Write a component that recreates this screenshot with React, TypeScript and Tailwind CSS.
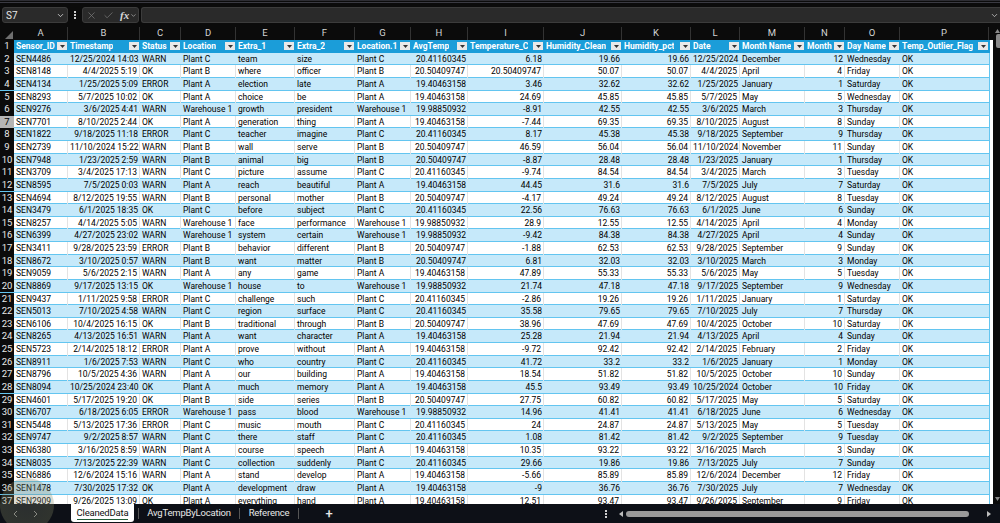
import React from "react";
import { ChevronDown, Check, X } from "lucide-react";

const headers = [
  "Sensor_ID", "Timestamp", "Status", "Location", "Extra_1", "Extra_2", "Location.1", "AvgTemp",
  "Temperature_C", "Humidity_Clean", "Humidity_pct", "Date", "Month Name", "Month", "Day Name", "Temp_Outlier_Flag",
];
const letters = "ABCDEFGHIJKLMNOP".split("");

const avg: Record<string, string> = {
  "Plant A": "19.40463158",
  "Plant B": "20.50409747",
  "Plant C": "20.41160345",
  "Warehouse 1": "19.98850932",
};
const W = "Warehouse 1";
const A = "Plant A";
const B = "Plant B";
const C = "Plant C";

// id, timestamp, status, location, extra1, extra2, temp, humidity, date, month name, month, day
const rows: string[][] = [
  ["SEN4486", "12/25/2024 14:03", "WARN", C, "team", "size", "6.18", "19.66", "12/25/2024", "December", "12", "Wednesday"],
  ["SEN8148", "4/4/2025 5:19", "OK", B, "where", "officer", "20.50409747", "50.07", "4/4/2025", "April", "4", "Friday"],
  ["SEN4134", "1/25/2025 5:09", "ERROR", A, "election", "late", "3.46", "32.62", "1/25/2025", "January", "1", "Saturday"],
  ["SEN8293", "5/7/2025 10:02", "OK", A, "choice", "be", "24.69", "45.85", "5/7/2025", "May", "5", "Wednesday"],
  ["SEN9276", "3/6/2025 4:41", "WARN", W, "growth", "president", "-8.91", "42.55", "3/6/2025", "March", "3", "Thursday"],
  ["SEN7701", "8/10/2025 2:44", "OK", A, "generation", "thing", "-7.44", "69.35", "8/10/2025", "August", "8", "Sunday"],
  ["SEN1822", "9/18/2025 11:18", "ERROR", C, "teacher", "imagine", "8.17", "45.38", "9/18/2025", "September", "9", "Thursday"],
  ["SEN2739", "11/10/2024 15:22", "WARN", B, "wall", "serve", "46.59", "56.04", "11/10/2024", "November", "11", "Sunday"],
  ["SEN7948", "1/23/2025 2:59", "WARN", B, "animal", "big", "-8.87", "28.48", "1/23/2025", "January", "1", "Thursday"],
  ["SEN3709", "3/4/2025 17:13", "WARN", C, "picture", "assume", "-9.74", "84.54", "3/4/2025", "March", "3", "Tuesday"],
  ["SEN8595", "7/5/2025 0:03", "WARN", A, "reach", "beautiful", "44.45", "31.6", "7/5/2025", "July", "7", "Saturday"],
  ["SEN4694", "8/12/2025 19:55", "WARN", B, "personal", "mother", "-4.17", "49.24", "8/12/2025", "August", "8", "Tuesday"],
  ["SEN3479", "6/1/2025 18:35", "OK", C, "before", "subject", "22.56", "76.63", "6/1/2025", "June", "6", "Sunday"],
  ["SEN8257", "4/14/2025 5:05", "WARN", W, "face", "performance", "28.9", "12.55", "4/14/2025", "April", "4", "Monday"],
  ["SEN6399", "4/27/2025 23:02", "WARN", W, "system", "certain", "-9.42", "84.38", "4/27/2025", "April", "4", "Sunday"],
  ["SEN3411", "9/28/2025 23:59", "ERROR", B, "behavior", "different", "-1.88", "62.53", "9/28/2025", "September", "9", "Sunday"],
  ["SEN8672", "3/10/2025 0:57", "WARN", B, "want", "matter", "6.81", "32.03", "3/10/2025", "March", "3", "Monday"],
  ["SEN9059", "5/6/2025 2:15", "WARN", A, "any", "game", "47.89", "55.33", "5/6/2025", "May", "5", "Tuesday"],
  ["SEN8869", "9/17/2025 13:15", "OK", W, "house", "to", "21.74", "47.18", "9/17/2025", "September", "9", "Wednesday"],
  ["SEN9437", "1/11/2025 9:58", "ERROR", C, "challenge", "such", "-2.86", "19.26", "1/11/2025", "January", "1", "Saturday"],
  ["SEN5013", "7/10/2025 4:58", "WARN", C, "region", "surface", "35.58", "79.65", "7/10/2025", "July", "7", "Thursday"],
  ["SEN6106", "10/4/2025 16:15", "OK", B, "traditional", "through", "38.96", "47.69", "10/4/2025", "October", "10", "Saturday"],
  ["SEN8265", "4/13/2025 16:51", "WARN", A, "want", "character", "25.28", "21.94", "4/13/2025", "April", "4", "Sunday"],
  ["SEN5723", "2/14/2025 18:12", "ERROR", A, "prove", "without", "-9.72", "92.42", "2/14/2025", "February", "2", "Friday"],
  ["SEN8911", "1/6/2025 7:53", "WARN", C, "who", "country", "41.72", "33.2", "1/6/2025", "January", "1", "Monday"],
  ["SEN8796", "10/5/2025 4:36", "WARN", A, "our", "building", "18.54", "51.82", "10/5/2025", "October", "10", "Sunday"],
  ["SEN8094", "10/25/2024 23:40", "OK", A, "much", "memory", "45.5", "93.49", "10/25/2024", "October", "10", "Friday"],
  ["SEN4601", "5/17/2025 19:20", "OK", B, "side", "series", "27.75", "60.82", "5/17/2025", "May", "5", "Saturday"],
  ["SEN6707", "6/18/2025 6:05", "ERROR", W, "pass", "blood", "14.96", "41.41", "6/18/2025", "June", "6", "Wednesday"],
  ["SEN5448", "5/13/2025 17:36", "ERROR", C, "music", "mouth", "24", "24.87", "5/13/2025", "May", "5", "Tuesday"],
  ["SEN9747", "9/2/2025 8:57", "WARN", C, "there", "staff", "1.08", "81.42", "9/2/2025", "September", "9", "Tuesday"],
  ["SEN6380", "3/16/2025 8:59", "WARN", A, "course", "speech", "10.35", "93.22", "3/16/2025", "March", "3", "Sunday"],
  ["SEN8035", "7/13/2025 22:39", "WARN", C, "collection", "suddenly", "29.66", "19.86", "7/13/2025", "July", "7", "Sunday"],
  ["SEN6886", "12/6/2024 15:16", "WARN", A, "stand", "develop", "-5.66", "85.89", "12/6/2024", "December", "12", "Friday"],
  ["SEN1478", "7/30/2025 17:32", "OK", A, "development", "draw", "-9", "36.76", "7/30/2025", "July", "7", "Wednesday"],
  ["SEN2909", "9/26/2025 13:09", "OK", A, "everything", "hand", "12.51", "93.47", "9/26/2025", "September", "9", "Friday"],
];

// column widths shared by every row of the sheet
const gridCols =
  "grid grid-cols-[14px_54px_72px_41px_55px_59px_60px_56px_57px_76px_78px_69px_49px_65px_40px_55px_89px]";

function Cell({ value, right, white }: { value: string; right?: boolean; white: boolean }) {
  return (
    <div
      className={`overflow-hidden whitespace-nowrap px-[2px] leading-[12.6px] ${right ? "text-right" : "text-left"} ${
        white ? "border-r border-[#e3e3e3]" : ""
      }`}
    >
      {value}
    </div>
  );
}

function DataRow({ row, index }: { row: string[]; index: number }) {
  const [id, ts, status, loc, e1, e2, temp, hum, date, mName, month, day] = row;
  const white = index % 2 === 1;
  const num = index + 2;
  const selected = num === 7;
  return (
    <div
      className={`${gridCols} h-[12.625px] border-b border-[#63c5f0] text-black ${
        white ? "bg-white" : "bg-[#c6e9fa]"
      }`}
    >
      <div
        className={`text-center text-[9.5px] leading-[12.6px] ${
          selected ? "bg-[#b5b5b5] text-black" : "bg-[#0b0b0b] text-[#e8e8e8]"
        }`}
      >
        {num}
      </div>
      <Cell value={id} white={white} />
      <Cell value={ts} right white={white} />
      <Cell value={status} white={white} />
      <Cell value={loc} white={white} />
      <Cell value={e1} white={white} />
      <Cell value={e2} white={white} />
      <Cell value={loc} white={white} />
      <Cell value={avg[loc]} right white={white} />
      <Cell value={temp} right white={white} />
      <Cell value={hum} right white={white} />
      <Cell value={hum} right white={white} />
      <Cell value={date} right white={white} />
      <Cell value={mName} white={white} />
      <Cell value={month} right white={white} />
      <Cell value={day} white={white} />
      <Cell value="OK" white={false} />
    </div>
  );
}

function FilterHeader({ label }: { label: string }) {
  return (
    <div className="flex min-w-0 items-center justify-between overflow-hidden pl-[2px] pr-[1px]">
      <span className="overflow-hidden whitespace-nowrap font-bold text-white">{label}</span>
      <span className="flex h-[8px] w-[10px] shrink-0 items-center justify-center bg-[#e9e9e9]">
        <svg width="5" height="3" viewBox="0 0 5 3">
          <path d="M0 0h5L2.5 3z" fill="#333" />
        </svg>
      </span>
    </div>
  );
}

function Dots() {
  return (
    <span className="flex flex-col gap-[1px]">
      <span className="h-[2px] w-[2px] bg-[#cfcfcf]" />
      <span className="h-[2px] w-[2px] bg-[#cfcfcf]" />
      <span className="h-[2px] w-[2px] bg-[#cfcfcf]" />
    </span>
  );
}

export default function App() {
  return (
    <div className="relative flex h-[523px] w-[1000px] flex-col overflow-hidden bg-[#0b0b0b] font-['Roboto',sans-serif] text-[8.5px]">
      {/* window edge */}
      <div className="h-[7px] shrink-0 border-t border-[#2d2d33] pt-[1px]">
        <div className="h-[1px] bg-[#3a3a42]" />
      </div>

      {/* formula bar */}
      <div className="flex h-[16px] shrink-0 items-stretch gap-[2px] pl-[2px] text-[#e6e6e6]">
        <div className="flex w-[66px] items-center justify-between rounded-[3px] border border-[#3c3c3c] bg-[#2a2a2a] pl-[3px] pr-[2px] text-[10px]">
          <span>S7</span>
          <ChevronDown size={9} strokeWidth={2} />
        </div>
        <div className="flex w-[10px] items-center justify-center">
          <Dots />
        </div>
        <div className="flex w-[57px] items-center gap-[6px] rounded-[3px] border border-[#3c3c3c] bg-[#2a2a2a] pl-[3px] text-[#7d7d7d]">
          <X size={11} strokeWidth={1.5} />
          <Check size={11} strokeWidth={1.5} />
          <span className="flex items-center gap-[1px]">
            <span className="font-['Liberation_Serif',serif] text-[11px] font-bold italic text-[#d8d8d8]">fx</span>
            <ChevronDown size={7} strokeWidth={2} className="text-[#c8c8c8]" />
          </span>
        </div>
        <div className="flex flex-1 items-center justify-end rounded-l-[3px] border border-r-0 border-[#3c3c3c] bg-[#2a2a2a] pr-[1px]">
          <ChevronDown size={9} strokeWidth={2} className="text-[#cfcfcf]" />
        </div>
      </div>

      <div className="h-[4px] shrink-0" />

      {/* sheet + vertical scrollbar */}
      <div className="flex h-[477px] shrink-0 items-stretch overflow-hidden">
        <div className="w-[990px] shrink-0">
          <div className={`${gridCols} h-[13px] bg-[#0b0b0b] text-[9.5px] text-[#d4d4d4]`}>
            <div className="flex items-end justify-end pb-[1px] pr-[1px]">
              <svg width="8" height="8" viewBox="0 0 8 8">
                <path d="M8 0v8H0z" fill="#6f6f6f" />
              </svg>
            </div>
            {letters.map((l) => (
              <div key={l} className="border-r border-[#333] text-center leading-[12px]">
                {l}
              </div>
            ))}
          </div>
          <div className={`${gridCols} h-[12.625px] bg-[#1b9dd9] leading-[12.6px]`}>
            <div className="bg-[#0b0b0b] text-center text-[9.5px] text-[#e8e8e8]">1</div>
            {headers.map((h) => (
              <FilterHeader key={h} label={h} />
            ))}
          </div>
          <div className="border-r border-[#63c5f0]">
            {rows.map((row, i) => (
              <DataRow key={row[0]} row={row} index={i} />
            ))}
          </div>
        </div>
        {/* empty column Q, then the scrollbar cut off by the screenshot edge */}
        <div className="mt-[13px] w-[3px] shrink-0 bg-white" />
        <div className="flex flex-1 flex-col items-end pb-[3px] pt-[2px]">
          <svg width="5" height="4" viewBox="0 0 5 4">
            <path d="M2.5 0L5 4H0z" fill="#8a8a8a" />
          </svg>
          <div className="mt-[1px] h-[14px] w-[4px] rounded-l-[2px] bg-[#8a8a8a]" />
          <div className="flex-1" />
          <svg width="5" height="4" viewBox="0 0 5 4">
            <path d="M0 0h5L2.5 4z" fill="#8a8a8a" />
          </svg>
        </div>
      </div>

      {/* sheet tabs */}
      <div className="flex h-[19px] shrink-0 items-stretch bg-[#0d1017] text-[9.5px] tracking-[-0.2px] text-[#e8e8e8]">
        <div className="flex w-[71px] items-center gap-[15px] pl-[13px] text-[#8d8d8d]">
          <svg width="5" height="8" viewBox="0 0 5 8" fill="none" stroke="currentColor">
            <path d="M4 1L1 4l3 3" />
          </svg>
          <svg width="5" height="8" viewBox="0 0 5 8" fill="none" stroke="currentColor">
            <path d="M1 1l3 3-3 3" />
          </svg>
        </div>
        <div className="mb-[1px] flex w-[63px] flex-col items-center justify-center rounded-b-[3px] bg-white text-[#111]">
          <span className="border-b border-[#1f5c36] leading-[13px]">CleanedData</span>
        </div>
        <div className="w-[4px]" />
        <div className="my-[4px] w-[1px] bg-[#555]" />
        <div className="flex w-[100px] items-center justify-center">AvgTempByLocation</div>
        <div className="my-[4px] w-[1px] bg-[#555]" />
        <div className="flex w-[58px] items-center justify-center">Reference</div>
        <div className="my-[4px] w-[1px] bg-[#555]" />
        <div className="flex w-[60px] items-center justify-center text-[13px] font-medium">+</div>
        <div className="flex w-[248px] items-center justify-end">
          <Dots />
        </div>
        <div className="flex flex-1 items-center gap-[3px] pl-[12px] pr-[9px]">
          <svg width="4" height="6" viewBox="0 0 4 6">
            <path d="M4 0v6L0 3z" fill="#bdbdbd" />
          </svg>
          <div className="h-[6px] w-[343px] rounded-full bg-[#9a9a9a]" />
          <div className="flex-1" />
          <svg width="4" height="6" viewBox="0 0 4 6">
            <path d="M0 0v6l4-3z" fill="#bdbdbd" />
          </svg>
        </div>
      </div>

      {/* cursor highlight ring from the screen recorder */}
      <div className="pointer-events-none absolute left-0 top-[478px] h-[54px] w-[54px] rounded-full bg-[radial-gradient(circle,rgba(120,125,110,0.28)_0%,rgba(130,135,100,0.3)_70%,rgba(180,190,90,0.35)_88%,rgba(180,190,90,0)_100%)]" />
    </div>
  );
}
